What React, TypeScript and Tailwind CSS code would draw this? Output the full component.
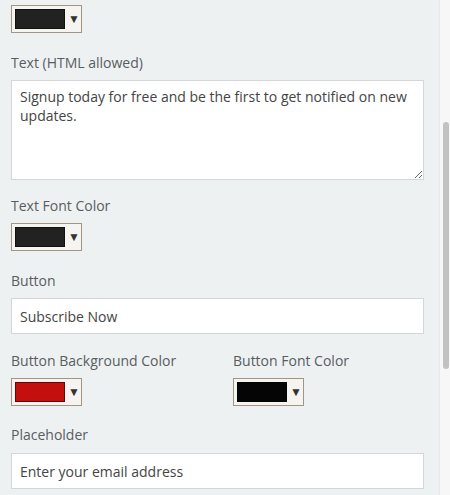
import React from 'react';

const labelCls = "h-[20px] leading-[20px] text-[14px] text-[#585d61]";
const fieldCls = "block w-[413px] border border-[#d4d7d9] bg-white text-[14px] text-[#444] px-[8px] outline-none";

function ColorPicker({ color }: { color: string }) {
    return (
        <div className="flex h-[28px] w-[71px] items-center border border-[#a39483] bg-[#f6f4f1] pl-[3px]">
            <div className="h-[20px] w-[50px] border border-black/50" style={{ backgroundColor: color }} />
            <span className="ml-[3px] text-[12px] leading-none text-[#333]">▼</span>
        </div>
    );
}

export default function App() {
    return (
        <div className="flex h-[495px] w-[450px] overflow-hidden bg-[#eef1f2]" style={{ fontFamily: '"Open Sans", "Noto Sans", sans-serif' }}>
            <div className="w-[439px] px-[11px] pt-[5px]">
                <ColorPicker color="#222222" />

                <div className={`${labelCls} mt-[20px]`}>Text (HTML allowed)</div>
                <textarea
                    readOnly
                    className={`${fieldCls} mt-[7px] h-[100px] resize py-[6px] leading-[19px]`}
                    defaultValue="Signup today for free and be the first to get notified on new updates."
                />

                <div className={`${labelCls} mt-[16px]`}>Text Font Color</div>
                <div className="mt-[7px]">
                    <ColorPicker color="#222222" />
                </div>

                <div className={`${labelCls} mt-[20px]`}>Button</div>
                <input readOnly className={`${fieldCls} mt-[7px] h-[36px]`} defaultValue="Subscribe Now" />

                <div className="mt-[17px] flex">
                    <div className="w-[222px]">
                        <div className={labelCls}>Button Background Color</div>
                        <div className="mt-[7px]">
                            <ColorPicker color="#c40f0f" />
                        </div>
                    </div>
                    <div>
                        <div className={labelCls}>Button Font Color</div>
                        <div className="mt-[7px]">
                            <ColorPicker color="#050505" />
                        </div>
                    </div>
                </div>

                <div className={`${labelCls} mt-[19px]`}>Placeholder</div>
                <input readOnly className={`${fieldCls} mt-[8px] h-[36px]`} defaultValue="Enter your email address" />
            </div>

            {/* scrollbar */}
            <div className="w-[11px] border-l border-[#e6e8e9] bg-[#f7f7f7] pt-[122px]">
                <div className="ml-[3px] h-[247px] w-[6px] rounded-full bg-[#c2c2c2]" />
            </div>
        </div>
    );
}
